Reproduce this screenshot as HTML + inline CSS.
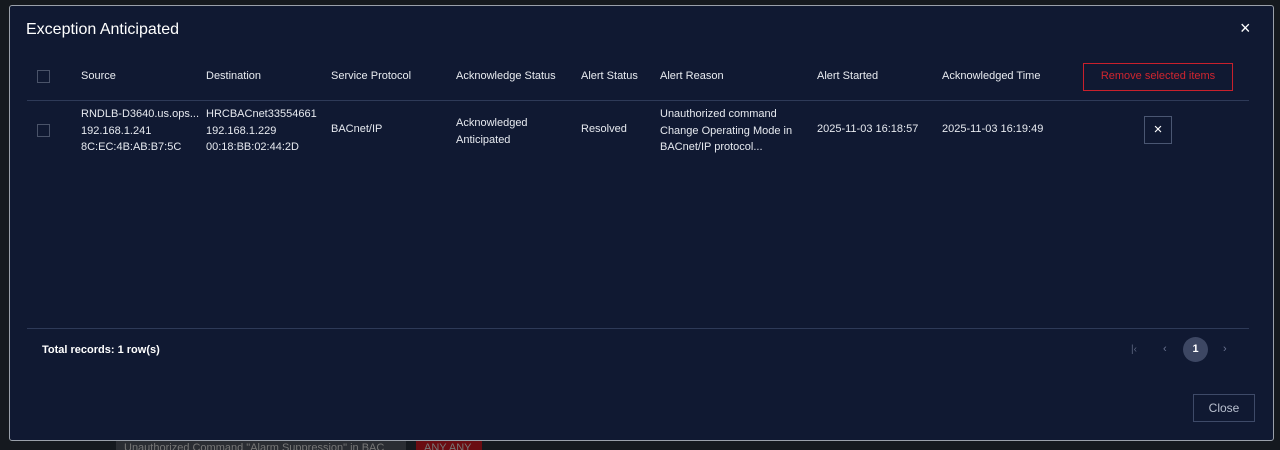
<!DOCTYPE html>
<html><head><style>
*{box-sizing:border-box;margin:0;padding:0}
body{width:1280px;height:450px;background:#15191f;font-family:"Liberation Sans",Arial,sans-serif;position:relative;overflow:hidden;color:#e6e9ef}
.modal{position:absolute;left:9px;top:5px;width:1265px;height:436px;background:#101932;border:1px solid #9aa0aa;border-radius:3px}
.a{position:absolute;font-size:11px;white-space:nowrap}
.h{font-size:11px;color:#e8ebf0}
.cb{position:absolute;width:13px;height:13px;border:1px solid #4a5369;background:#101932}
.bot{position:absolute;top:441px;height:9px;font-size:11px;color:#777;overflow:hidden}
</style></head><body>
<div class="bot" style="left:116px;width:290px;background:#2a2d33;padding-left:8px;line-height:14px">Unauthorized Command "Alarm Suppression" in BAC</div>
<div class="bot" style="left:416px;width:66px;background:#6a0c12;padding-left:8px;line-height:14px">ANY ANY</div>
<div class="modal">
<div class="a" style="left:16px;top:15px;font-size:16px;color:#fff">Exception Anticipated</div>
<div class="a" style="left:1230px;top:12px;font-size:18px;color:#fff">×</div>
<div class="cb" style="left:27px;top:64px"></div>
<div class="a h" style="left:71px;top:64px">Source</div>
<div class="a h" style="left:196px;top:64px">Destination</div>
<div class="a h" style="left:321px;top:64px">Service Protocol</div>
<div class="a h" style="left:446px;top:64px">Acknowledge Status</div>
<div class="a h" style="left:571px;top:64px">Alert Status</div>
<div class="a h" style="left:650px;top:64px">Alert Reason</div>
<div class="a h" style="left:807px;top:64px">Alert Started</div>
<div class="a h" style="left:932px;top:64px">Acknowledged Time</div>
<div class="a" style="left:1073px;top:57px;width:150px;height:28px;border:1.5px solid #c8202c;color:#d0252f;text-align:center;line-height:25px">Remove selected items</div>
<div style="position:absolute;left:17px;top:94px;width:1222px;height:1px;background:#2e3a58"></div>
<div class="cb" style="left:27px;top:118px"></div>
<div class="a" style="left:71px;top:100px;line-height:16.5px">RNDLB-D3640.us.ops...<br>192.168.1.241<br>8C:EC:4B:AB:B7:5C</div>
<div class="a" style="left:196px;top:100px;line-height:16.5px">HRCBACnet33554661<br>192.168.1.229<br>00:18:BB:02:44:2D</div>
<div class="a" style="left:321px;top:117px">BACnet/IP</div>
<div class="a" style="left:446px;top:109px;line-height:16.5px">Acknowledged<br>Anticipated</div>
<div class="a" style="left:571px;top:117px">Resolved</div>
<div class="a" style="left:650px;top:100px;line-height:16.5px">Unauthorized command<br>Change Operating Mode in<br>BACnet/IP protocol...</div>
<div class="a" style="left:807px;top:117px">2025-11-03 16:18:57</div>
<div class="a" style="left:932px;top:117px">2025-11-03 16:19:49</div>
<div class="a" style="left:1134px;top:110px;width:28px;height:28px;border:1px solid #4a5672;text-align:center;line-height:26px;font-size:15px;color:#fff">×</div>
<div style="position:absolute;left:17px;top:322px;width:1222px;height:1px;background:#2e3a58"></div>
<div class="a" style="left:32px;top:338px;color:#fff;font-weight:bold">Total records: 1 row(s)</div>
<div class="a" style="left:1121px;top:338px;color:#5c6580;font-size:10px">|‹</div>
<div class="a" style="left:1153px;top:337px;color:#6a7390">‹</div>
<div class="a" style="left:1173px;top:331px;width:25px;height:25px;border-radius:50%;background:#3d4763;text-align:center;line-height:25px;font-weight:bold;color:#fff">1</div>
<div class="a" style="left:1213px;top:337px;color:#6a7390">›</div>
<div class="a" style="left:1183px;top:388px;width:62px;height:28px;border:1px solid #3e4a68;text-align:center;line-height:26px;color:#b9c0cf;font-size:12px">Close</div>
</div>
</body></html>
